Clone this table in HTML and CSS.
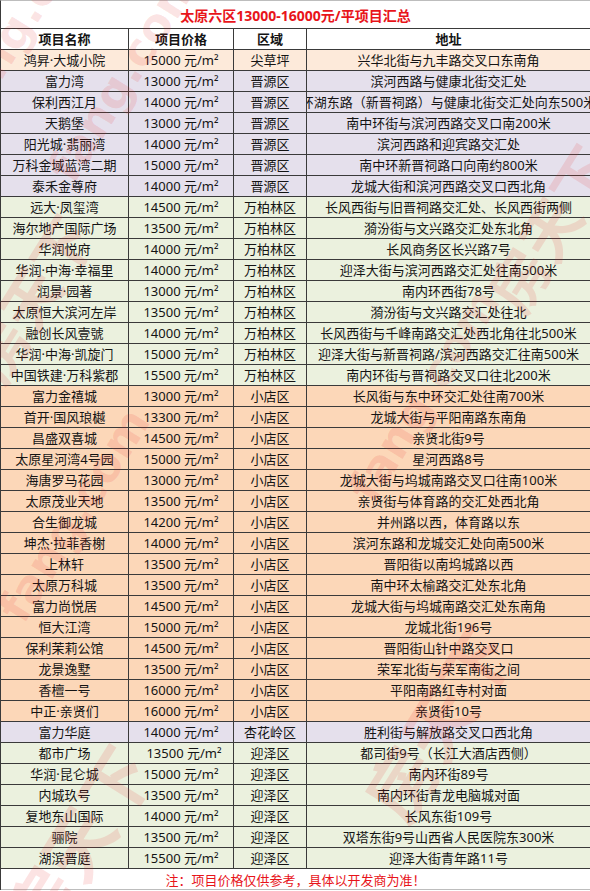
FILE: index.html
```html
<!DOCTYPE html>
<html lang="zh-CN">
<head>
<meta charset="utf-8">
<title>太原六区13000-16000元/平项目汇总</title>
<link rel="stylesheet" href="styles.css">
</head>
<body>
<div class="sheet">
  <div class="grid">
    <div class="title">太原六区13000-16000元/平项目汇总</div>
    <div class="c h">项目名称</div><div class="c h">项目价格</div><div class="c h">区域</div><div class="c h">地址</div>

    <div class="c r-peach">鸿昇·大城小院</div><div class="c r-peach">15000 元/m²</div><div class="c r-peach">尖草坪</div><div class="c r-peach">兴华北街与九丰路交叉口东南角</div>

    <div class="c r-lav">富力湾</div><div class="c r-lav">13000 元/m²</div><div class="c r-lav">晋源区</div><div class="c r-lav">滨河西路与健康北街交汇处</div>
    <div class="c r-lav">保利西江月</div><div class="c r-lav">14000 元/m²</div><div class="c r-lav">晋源区</div><div class="c r-lav"><span>环湖东路（新晋祠路）与健康北街交汇处向东500米</span></div>
    <div class="c r-lav">天鹅堡</div><div class="c r-lav">13000 元/m²</div><div class="c r-lav">晋源区</div><div class="c r-lav">南中环街与滨河西路交叉口南200米</div>
    <div class="c r-lav">阳光城·翡丽湾</div><div class="c r-lav">14000 元/m²</div><div class="c r-lav">晋源区</div><div class="c r-lav">滨河西路和迎宾路交汇处</div>
    <div class="c r-lav">万科金域蓝湾二期</div><div class="c r-lav">15000 元/m²</div><div class="c r-lav">晋源区</div><div class="c r-lav">南中环新晋祠路口向南约800米</div>
    <div class="c r-lav">泰禾金尊府</div><div class="c r-lav">14000 元/m²</div><div class="c r-lav">晋源区</div><div class="c r-lav">龙城大街和滨河西路交叉口西北角</div>

    <div class="c r-green">远大·凤玺湾</div><div class="c r-green">14500 元/m²</div><div class="c r-green">万柏林区</div><div class="c r-green">长风西街与旧晋祠路交汇处、长风西街两侧</div>
    <div class="c r-green">海尔地产国际广场</div><div class="c r-green">13500 元/m²</div><div class="c r-green">万柏林区</div><div class="c r-green">漪汾街与文兴路交汇处东北角</div>
    <div class="c r-green">华润悦府</div><div class="c r-green">14000 元/m²</div><div class="c r-green">万柏林区</div><div class="c r-green">长风商务区长兴路7号</div>
    <div class="c r-green">华润·中海·幸福里</div><div class="c r-green">14000 元/m²</div><div class="c r-green">万柏林区</div><div class="c r-green">迎泽大街与滨河西路交汇处往南500米</div>
    <div class="c r-green">润景·园著</div><div class="c r-green">13000 元/m²</div><div class="c r-green">万柏林区</div><div class="c r-green">南内环西街78号</div>
    <div class="c r-green">太原恒大滨河左岸</div><div class="c r-green">13500 元/m²</div><div class="c r-green">万柏林区</div><div class="c r-green">漪汾街与文兴路交汇处往北</div>
    <div class="c r-green">融创长风壹號</div><div class="c r-green">14000 元/m²</div><div class="c r-green">万柏林区</div><div class="c r-green">长风西街与千峰南路交汇处西北角往北500米</div>
    <div class="c r-green">华润·中海·凯旋门</div><div class="c r-green">15000 元/m²</div><div class="c r-green">万柏林区</div><div class="c r-green">迎泽大街与新晋祠路/滨河西路交汇往南500米</div>
    <div class="c r-green">中国铁建·万科紫郡</div><div class="c r-green">15500 元/m²</div><div class="c r-green">万柏林区</div><div class="c r-green">南内环街与晋祠路交叉口往北200米</div>

    <div class="c r-orange">富力金禧城</div><div class="c r-orange">13000 元/m²</div><div class="c r-orange">小店区</div><div class="c r-orange">长风街与东中环交汇处往南700米</div>
    <div class="c r-orange">首开·国风琅樾</div><div class="c r-orange">13300 元/m²</div><div class="c r-orange">小店区</div><div class="c r-orange">龙城大街与平阳南路东南角</div>
    <div class="c r-orange">昌盛双喜城</div><div class="c r-orange">14500 元/m²</div><div class="c r-orange">小店区</div><div class="c r-orange">亲贤北街9号</div>
    <div class="c r-orange">太原星河湾4号园</div><div class="c r-orange">15000 元/m²</div><div class="c r-orange">小店区</div><div class="c r-orange">星河西路8号</div>
    <div class="c r-orange">海唐罗马花园</div><div class="c r-orange">13000 元/m²</div><div class="c r-orange">小店区</div><div class="c r-orange">龙城大街与坞城南路交叉口往南100米</div>
    <div class="c r-orange">太原茂业天地</div><div class="c r-orange">13500 元/m²</div><div class="c r-orange">小店区</div><div class="c r-orange">亲贤街与体育路的交汇处西北角</div>
    <div class="c r-orange">合生御龙城</div><div class="c r-orange">14200 元/m²</div><div class="c r-orange">小店区</div><div class="c r-orange">并州路以西，体育路以东</div>
    <div class="c r-orange">坤杰·拉菲香榭</div><div class="c r-orange">14000 元/m²</div><div class="c r-orange">小店区</div><div class="c r-orange">滨河东路和龙城交汇处向南500米</div>
    <div class="c r-orange">上林轩</div><div class="c r-orange">13500 元/m²</div><div class="c r-orange">小店区</div><div class="c r-orange">晋阳街以南坞城路以西</div>
    <div class="c r-orange">太原万科城</div><div class="c r-orange">13500 元/m²</div><div class="c r-orange">小店区</div><div class="c r-orange">南中环太榆路交汇处东北角</div>
    <div class="c r-orange">富力尚悦居</div><div class="c r-orange">14500 元/m²</div><div class="c r-orange">小店区</div><div class="c r-orange">龙城大街与坞城南路交汇处东南角</div>
    <div class="c r-orange">恒大江湾</div><div class="c r-orange">15000 元/m²</div><div class="c r-orange">小店区</div><div class="c r-orange">龙城北街196号</div>
    <div class="c r-orange">保利茉莉公馆</div><div class="c r-orange">14500 元/m²</div><div class="c r-orange">小店区</div><div class="c r-orange">晋阳街山针中路交叉口</div>
    <div class="c r-orange">龙景逸墅</div><div class="c r-orange">13500 元/m²</div><div class="c r-orange">小店区</div><div class="c r-orange">荣军北街与荣军南街之间</div>
    <div class="c r-orange">香檀一号</div><div class="c r-orange">16000 元/m²</div><div class="c r-orange">小店区</div><div class="c r-orange">平阳南路红寺村对面</div>
    <div class="c r-orange">中正·亲贤们</div><div class="c r-orange">16000 元/m²</div><div class="c r-orange">小店区</div><div class="c r-orange">亲贤街10号</div>

    <div class="c r-lav">富力华庭</div><div class="c r-lav">14000 元/m²</div><div class="c r-lav">杏花岭区</div><div class="c r-lav">胜利街与解放路交叉口西北角</div>

    <div class="c r-green">都市广场</div><div class="c r-green shift">13500 元/m²</div><div class="c r-green">迎泽区</div><div class="c r-green">都司街9号（长江大酒店西侧）</div>
    <div class="c r-green">华润·昆仑城</div><div class="c r-green">15000 元/m²</div><div class="c r-green">迎泽区</div><div class="c r-green">南内环街89号</div>
    <div class="c r-green">内城玖号</div><div class="c r-green">13500 元/m²</div><div class="c r-green">迎泽区</div><div class="c r-green">南内环街青龙电脑城对面</div>
    <div class="c r-green">复地东山国际</div><div class="c r-green">14000 元/m²</div><div class="c r-green">迎泽区</div><div class="c r-green">长风东街109号</div>
    <div class="c r-green">骊院</div><div class="c r-green">13500 元/m²</div><div class="c r-green">迎泽区</div><div class="c r-green">双塔东街9号山西省人民医院东300米</div>
    <div class="c r-green">湖滨晋庭</div><div class="c r-green">15500 元/m²</div><div class="c r-green">迎泽区</div><div class="c r-green">迎泽大街青年路11号</div>

    <div class="note">注：项目价格仅供参考，具体以开发商为准！</div>
  </div>
  <div class="watermark" aria-hidden="true">
    <span class="wm wm1">fang.com</span>
    <span class="wm wm2">房天下</span>
    <span class="wm wm3">fang.com</span>
    <span class="wm wm4">房天下</span>
    <span class="wm wm5">fang.com</span>
    <span class="wm wm6">房天下</span>
    <span class="wm wm7">fang.com</span>
    <span class="wm wm8">房天下</span>
  </div>
</div>
</body>
</html>
```

FILE: styles.css
```css
html, body {
  margin: 0;
  padding: 0;
  background: #ffffff;
}

body {
  font-family: "Noto Sans", "Noto Sans CJK SC", "DejaVu Sans", sans-serif;
  font-size: 13px;
  color: #141414;
}

.sheet {
  position: relative;
  width: 590px;
  height: 891px;
  overflow: hidden;
}

.grid {
  display: grid;
  grid-template-columns: 128px 105px 73px 284px;
  grid-template-rows: 28px;
  grid-auto-rows: 21px;
  border-left: 1px solid #3a3a3a;
  border-top: 1px solid #bdbdbd;
  box-sizing: border-box;
  width: 590px;
}

.title {
  grid-column: 1 / -1;
  box-sizing: border-box;
  border-right: 1px solid #3a3a3a;
  border-bottom: 1px solid #3a3a3a;
  display: flex;
  align-items: center;
  justify-content: center;
  color: #e8141a;
  font-weight: bold;
  font-size: 14px;
}

.c {
  box-sizing: border-box;
  border-right: 1px solid #3a3a3a;
  border-bottom: 1px solid #3a3a3a;
  display: flex;
  align-items: center;
  justify-content: center;
  white-space: nowrap;
  overflow: hidden;
  line-height: 20px;
}

.c > span { flex: none; }

.h {
  font-weight: bold;
  background: #ffffff;
}

.shift { padding-left: 6px; }

.r-peach { background: #fdeada; }
.r-lav { background: #e5e0ec; }
.r-green { background: #ebf1de; }
.r-orange { background: #fcd7b8; }

.note {
  grid-column: 1 / -1;
  box-sizing: border-box;
  border-right: 1px solid #3a3a3a;
  border-bottom: 1px solid #bdbdbd;
  display: flex;
  align-items: center;
  justify-content: center;
  color: #e8141a;
  background: #ffffff;
}

.watermark {
  position: absolute;
  inset: 0;
  pointer-events: none;
}

.wm {
  position: absolute;
  color: rgba(230, 40, 40, 0.13);
  font-family: "DejaVu Sans", "Noto Sans CJK SC", sans-serif;
  font-weight: bold;
  font-size: 46px;
  white-space: nowrap;
  transform-origin: left center;
  transform: rotate(-58deg);
}

.wm1 { left: 60px; top: 150px; }
.wm2 { left: -20px; top: 330px; font-size: 60px; }
.wm3 { left: 10px; top: 590px; }
.wm4 { left: 20px; top: 880px; font-size: 70px; }
.wm5 { left: 360px; top: 470px; }
.wm6 { left: 380px; top: 760px; font-size: 70px; }
.wm7 { left: -40px; top: 90px; }
.wm8 { left: 500px; top: 260px; font-size: 60px; }
```
